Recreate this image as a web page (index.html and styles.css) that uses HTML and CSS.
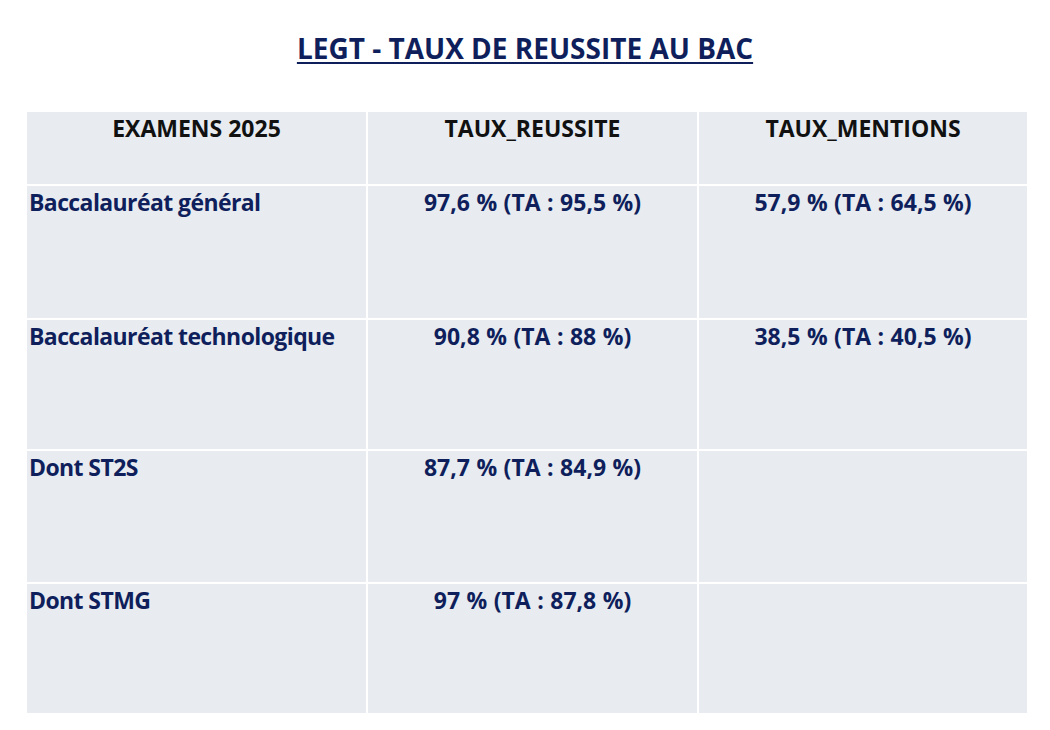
FILE: index.html
```html
<!DOCTYPE html>
<html lang="fr">
<head>
<meta charset="utf-8">
<title>LEGT - Taux de réussite au bac</title>
<link rel="stylesheet" href="styles.css">
</head>
<body>
<main class="page">
  <h1 class="title">LEGT - TAUX DE REUSSITE AU BAC</h1>
  <div class="table">
    <div class="cell head">EXAMENS 2025</div>
    <div class="cell head">TAUX_REUSSITE</div>
    <div class="cell head">TAUX_MENTIONS</div>

    <div class="cell label">Baccalauréat général</div>
    <div class="cell value">97,6 % (TA : 95,5 %)</div>
    <div class="cell value">57,9 % (TA : 64,5 %)</div>

    <div class="cell label">Baccalauréat technologique</div>
    <div class="cell value">90,8 % (TA : 88 %)</div>
    <div class="cell value">38,5 % (TA : 40,5 %)</div>

    <div class="cell label">Dont ST2S</div>
    <div class="cell value">87,7 % (TA : 84,9 %)</div>
    <div class="cell value"></div>

    <div class="cell label">Dont STMG</div>
    <div class="cell value">97 % (TA : 87,8 %)</div>
    <div class="cell value"></div>
  </div>
</main>
</body>
</html>
```

FILE: styles.css
```css
html, body {
  margin: 0;
  padding: 0;
  background: #ffffff;
}

body {
  font-family: "Open Sans", "Liberation Sans", sans-serif;
  font-weight: 700;
}

.page {
  width: 1050px;
  height: 730px;
  padding-top: 29px;
  box-sizing: border-box;
}

.title {
  margin: 0;
  text-align: center;
  font-size: 28px;
  line-height: 38px;
  font-weight: 700;
  color: #0f1f5c;
  text-decoration: underline;
  text-decoration-thickness: 2px;
  text-underline-offset: 3px;
}

.table {
  margin: 45px 0 0 27px;
  width: 1000px;
  display: grid;
  grid-template-columns: 339px 329px 328px;
  grid-template-rows: 72px 132px 129px 131px 129px;
  gap: 2px;
  background: #ffffff;
}

.cell {
  background: #e8ecf1;
  font-size: 23px;
  line-height: 28px;
  box-sizing: border-box;
}

.head {
  color: #111111;
  text-align: center;
  padding-top: 2px;
}

.label {
  color: #0f1f5c;
  padding: 2px 0 0 2px;
  letter-spacing: -0.6px;
}

.value {
  color: #0f1f5c;
  text-align: center;
  padding-top: 2px;
  word-spacing: 0.5px;
}
```
